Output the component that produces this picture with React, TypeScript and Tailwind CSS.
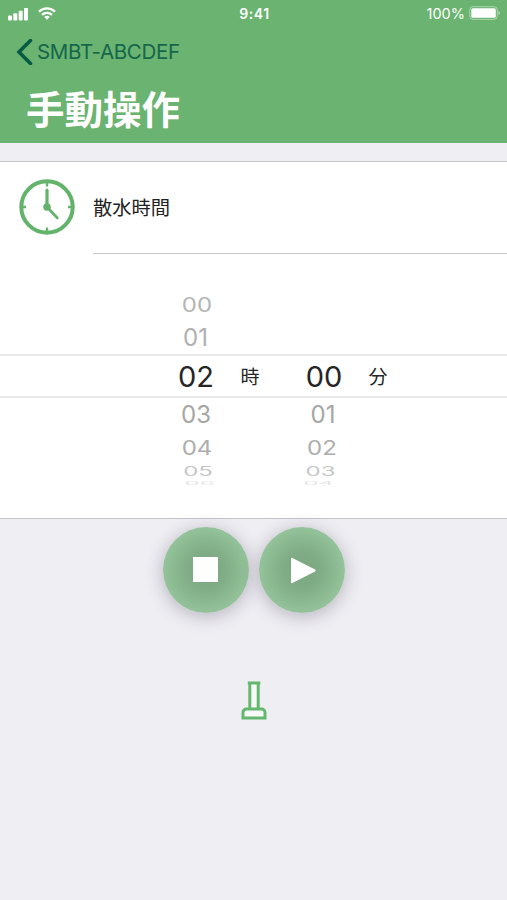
type PickerRow = {
  hour: string;
  minute?: string;
  row: string;
  hourText: string;
  minuteText?: string;
};

const ROWS_ABOVE: PickerRow[] = [
  { hour: "00", row: "h-[33px]", hourText: "translate-x-[1px] scale-y-[0.82] text-[#b4b4b4]" },
  { hour: "01", row: "h-[33px]", hourText: "-translate-x-[0.5px] text-[#b0b0b0]" },
];

const ROWS_BELOW: PickerRow[] = [
  { hour: "03", minute: "01", row: "h-[33px]", hourText: "text-[#a6a6a6]", minuteText: "text-[#a6a6a6]" },
  {
    hour: "04",
    minute: "02",
    row: "h-[33px]",
    hourText: "translate-x-[1px] scale-y-[0.82] text-[#adadad]",
    minuteText: "-translate-x-[1px] scale-y-[0.82] text-[#adadad]",
  },
  {
    hour: "05",
    minute: "03",
    row: "h-[15px]",
    hourText: "translate-x-[2px] scale-y-[0.52] text-[#c6c6c6]",
    minuteText: "-translate-x-[2.5px] scale-y-[0.52] text-[#c6c6c6]",
  },
  {
    hour: "06",
    minute: "04",
    row: "h-[9px]",
    hourText: "translate-x-[3.5px] scale-y-[0.18] text-[#e4e4e4]",
    minuteText: "-translate-x-[4.5px] scale-y-[0.18] text-[#e4e4e4]",
  },
];

function StatusBar() {
  return (
    <div className="grid h-7 grid-cols-3 items-center pl-2 pr-[6px] text-white">
      <div className="flex items-center gap-[9px]">
        <svg className="-mt-px" width="21" height="14" viewBox="0 0 21 14" fill="currentColor">
          <rect x="0" y="8.5" width="4" height="5" rx="1" />
          <rect x="5.3" y="6.2" width="4" height="7.3" rx="1" />
          <rect x="10.7" y="3.7" width="4" height="9.8" rx="1" />
          <rect x="16" y="1" width="4" height="12.5" rx="1" />
        </svg>
        <svg className="-mt-[2px]" width="18" height="13" viewBox="0 0 18 13" fill="none" stroke="currentColor">
          <path d="M1 4.7a11.3 11.3 0 0 1 16 0" strokeWidth="2.3" />
          <path d="M4 7.9a7.1 7.1 0 0 1 10 0" strokeWidth="2.2" />
          <path d="M6.2 10.1a4 4 0 0 1 5.6 0L9 12.8z" fill="currentColor" stroke="none" />
        </svg>
      </div>
      <span className="-mt-px text-center text-[14px] font-semibold tracking-[0.55px]">9:41</span>
      <div className="flex items-center justify-end gap-1">
        <span className="text-[14.5px]">100%</span>
        <svg className="-mt-[2px]" width="32" height="14" viewBox="0 0 32 14">
          <rect x="0.8" y="0.7" width="27.5" height="12.6" rx="3.2" fill="none" stroke="#fff" strokeOpacity="0.45" />
          <rect x="2.3" y="2.2" width="24.5" height="9.6" rx="1.6" fill="#fff" />
          <path d="M29.6 5v4c1.6-.6 1.6-3.4 0-4z" fill="#fff" fillOpacity="0.6" />
        </svg>
      </div>
    </div>
  );
}

function ClockIcon() {
  return (
    <svg className="-mt-[2px] ml-[19px] shrink-0" width="56" height="56" viewBox="0 0 56 56" fill="none" stroke="#64b36b">
      <circle cx="28" cy="28" r="25.7" strokeWidth="4" />
      <path d="M28 3v4.5M28 48.5V53M3 28h4M49 28h4" strokeWidth="2.4" />
      <path d="M28 28V11" strokeWidth="3.2" strokeLinecap="round" />
      <path d="M28 28l10.4 11" strokeWidth="2.6" strokeLinecap="round" />
      <circle cx="28" cy="28" r="3.8" fill="#64b36b" stroke="none" />
    </svg>
  );
}

function WheelRow({ item }: { item: PickerRow }) {
  return (
    <div className={`grid grid-cols-[52px_56px_90px] content-center items-center justify-items-center pl-[170px] text-[24px] leading-none ${item.row}`}>
      <span className={item.hourText}>{item.hour}</span>
      <span />
      {item.minute && <span className={item.minuteText}>{item.minute}</span>}
    </div>
  );
}

function RoundButton({ label, children }: { label: string; children: React.ReactNode }) {
  return (
    <button
      aria-label={label}
      className="flex size-[86px] items-center justify-center rounded-full bg-[radial-gradient(circle,#7ba680_0%,#7fab85_28%,#89b78e_50%,#94c29a_70%)] shadow-[0_3px_18px_rgba(60,50,70,0.32)]"
    >
      {children}
    </button>
  );
}

export default function App() {
  return (
    <div className="flex h-[900px] w-[507px] flex-col overflow-hidden bg-[#efeef3] font-['Inter','Noto_Sans_CJK_JP',sans-serif]">
      <header className="h-[143px] shrink-0 bg-[#6ab370]">
        <StatusBar />
        <div className="flex h-[49px] items-center pl-4 text-[#075a43]">
          <svg className="-mt-px" width="17" height="26" viewBox="0 0 17 26" fill="none" stroke="currentColor" strokeWidth="3.6">
            <path d="M14.5 1.5L3 13l11.5 11.5" strokeLinecap="round" />
          </svg>
          <span className="ml-[4px] text-[20.5px] tracking-[-0.3px] text-[#15664b]">SMBT-ABCDEF</span>
        </div>
        <h1 className="pl-[26px] text-[38.5px] font-bold leading-[66px] text-white">手動操作</h1>
      </header>

      <section className="mt-[18px] h-[358px] shrink-0 border-y border-[#c5c5c8] bg-white">
        <div className="flex h-[92px] items-stretch">
          <div className="flex w-[93px] shrink-0 items-center">
            <ClockIcon />
          </div>
          <div className="flex flex-1 items-center border-b border-[#c9c9ca] pt-px text-[19.3px] text-[#222]">散水時間</div>
        </div>

        <div className="pt-[34px]">
          {ROWS_ABOVE.map((item) => (
            <WheelRow key={item.hour} item={item} />
          ))}
          <div className="grid h-11 grid-cols-[52px_56px_90px_20px] items-center justify-items-center border-y-2 border-[#e9e9e9] pl-[170px] text-[29px] leading-none text-[#252525]">
            <span>02</span>
            <span className="pt-[2px] text-[19px]">時</span>
            <span className="translate-x-px">00</span>
            <span className="pt-[2px] text-[19px]">分</span>
          </div>
          {ROWS_BELOW.map((item) => (
            <WheelRow key={item.hour} item={item} />
          ))}
        </div>
      </section>

      <div className="mt-2 flex justify-center gap-[10px]">
        <RoundButton label="停止">
          <span className="-mt-px size-[25px] bg-white" />
        </RoundButton>
        <RoundButton label="開始">
          <svg className="ml-[3px] mt-px" width="26" height="27" viewBox="0 0 26 27" fill="#fff" stroke="#fff" strokeWidth="2" strokeLinejoin="round">
            <path d="M2 1.8L24.6 13.5L2 25.2z" />
          </svg>
        </RoundButton>
      </div>

      {/* sprinkler head */}
      <svg className="mx-auto mt-[67px] shrink-0" width="26" height="40" viewBox="0 0 26 40" fill="#f8faf9" stroke="#64b76e" strokeWidth="3">
        <path d="M8.8 29V3h8.4v26M6.8 3h12.6" />
        <path d="M5.5 29h15a3.5 3.5 0 0 1 3.5 3.5V38H2v-5.5A3.5 3.5 0 0 1 5.5 29z" />
      </svg>
    </div>
  );
}
